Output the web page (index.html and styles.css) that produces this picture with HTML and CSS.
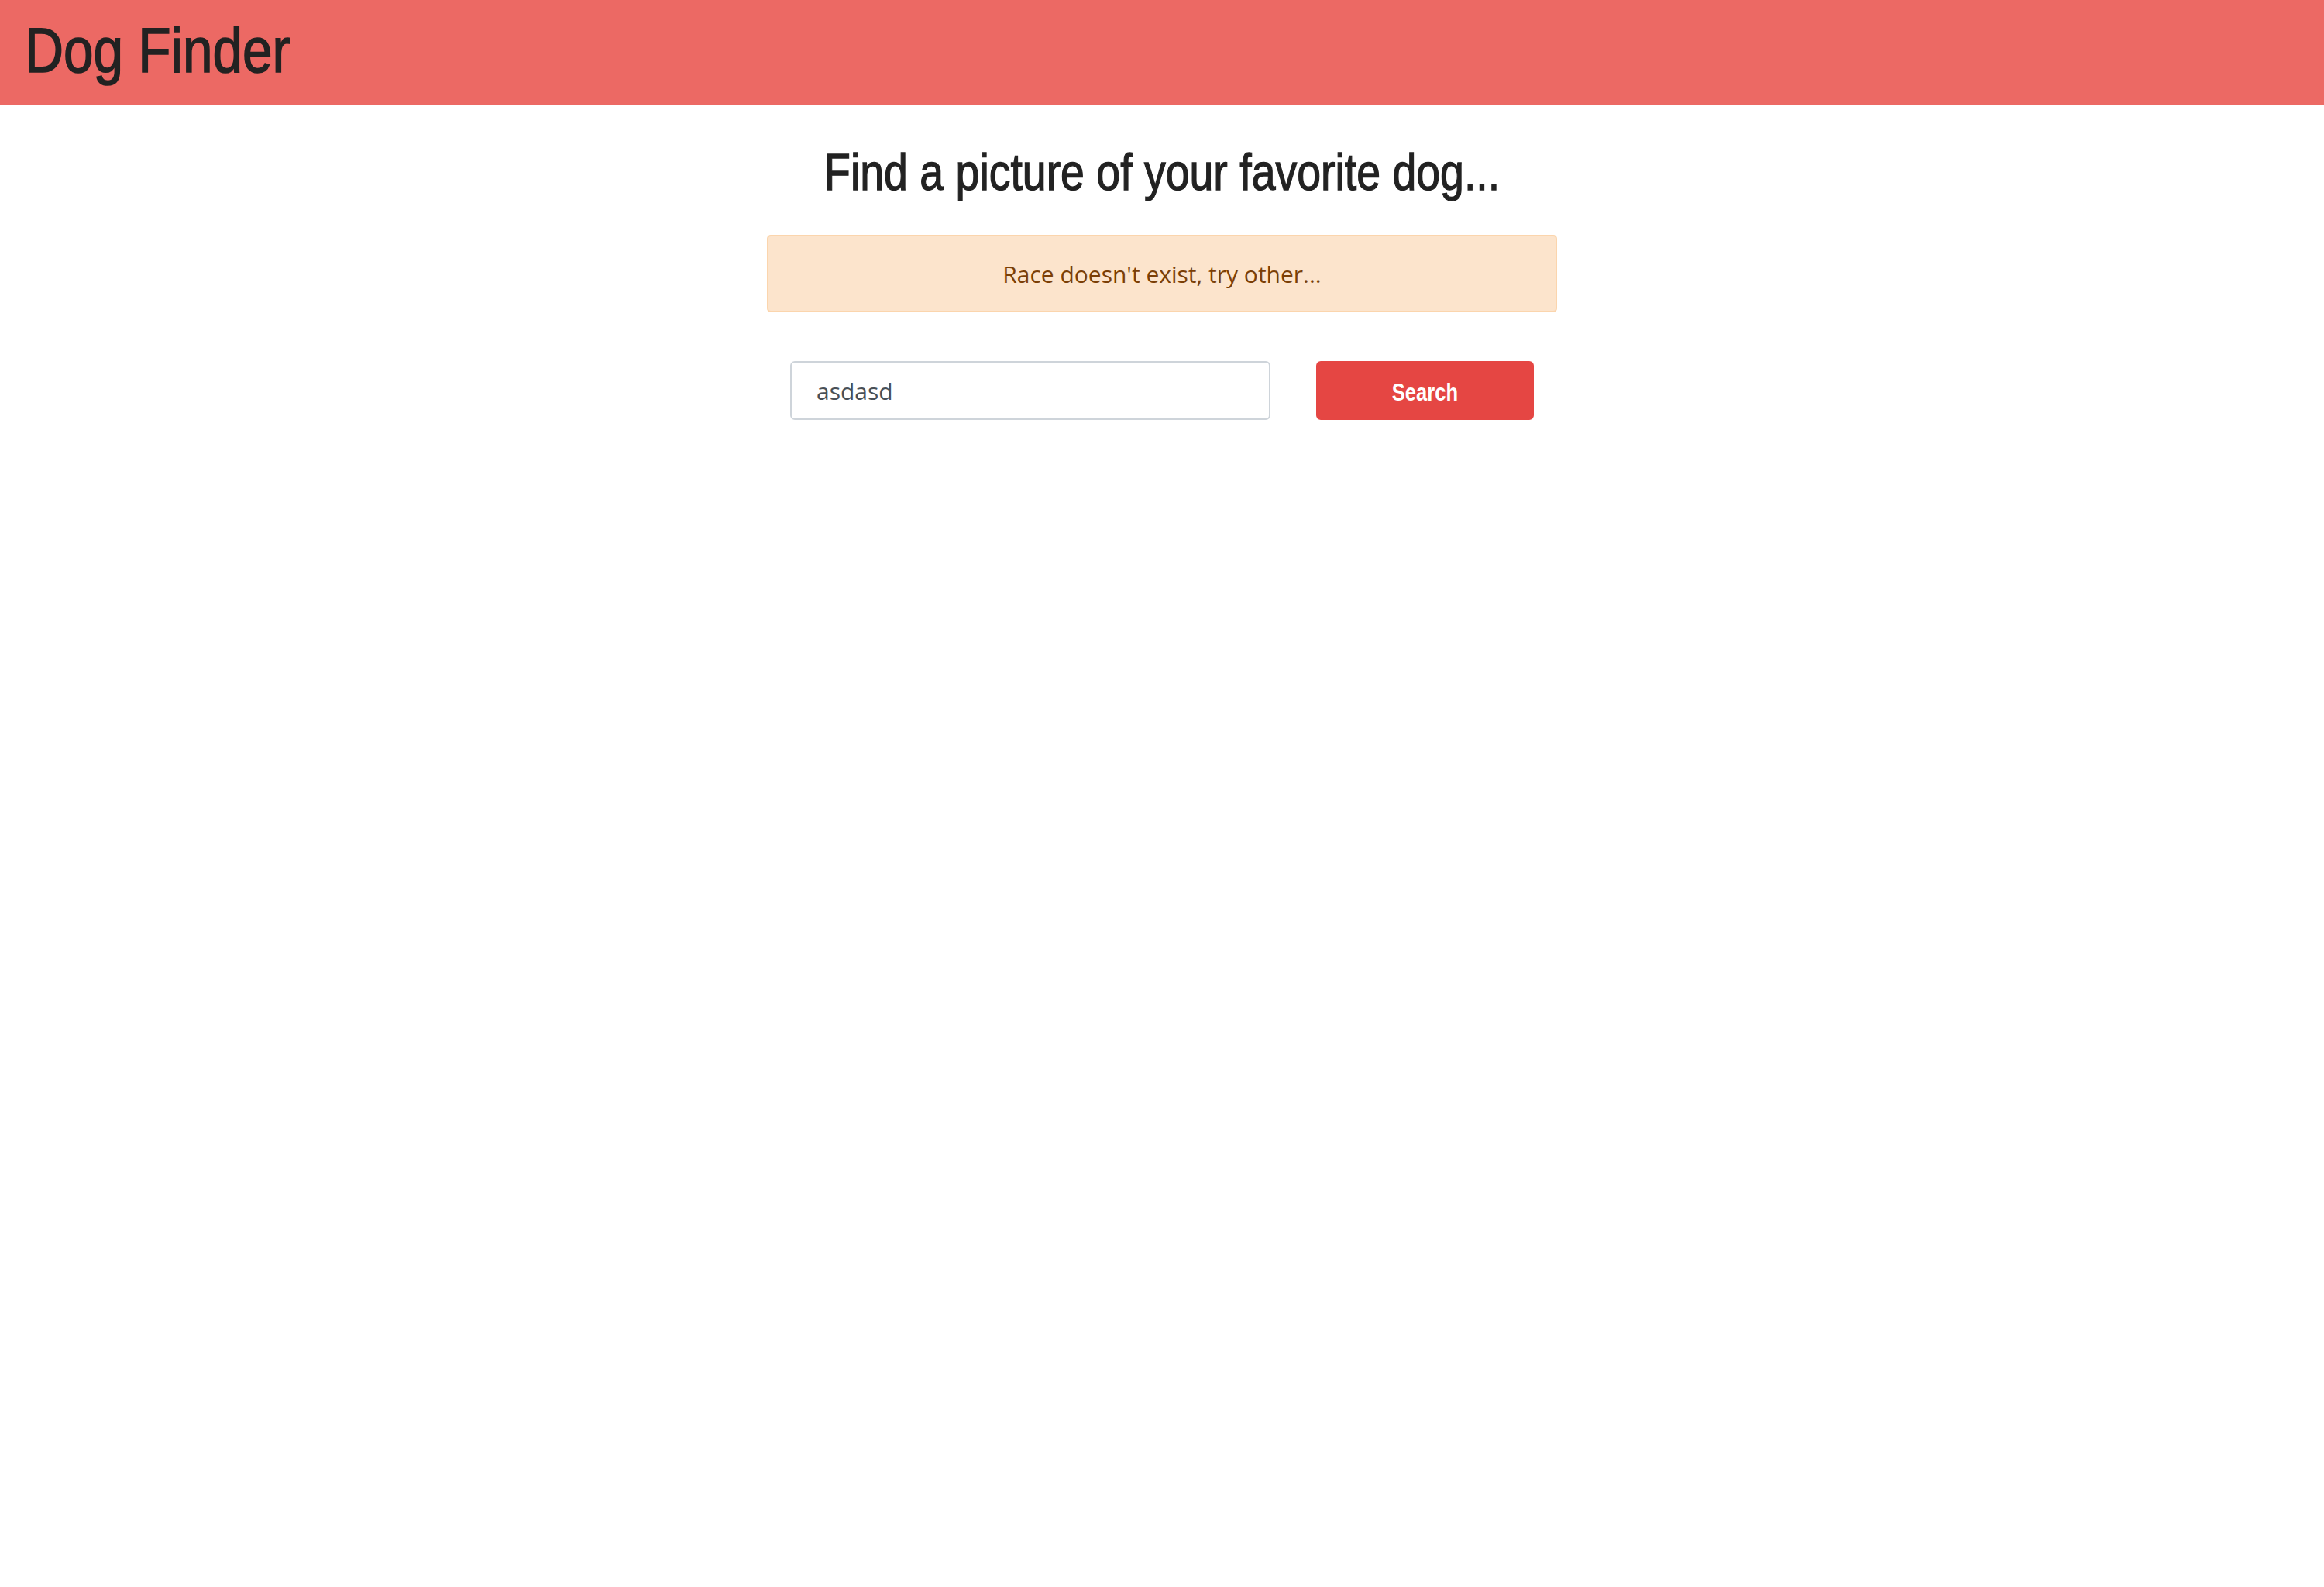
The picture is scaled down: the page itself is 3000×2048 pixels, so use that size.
FILE: index.html
```html
<!DOCTYPE html>
<html lang="en">
<head>
<meta charset="utf-8">
<title>Dog Finder</title>
<link rel="stylesheet" href="styles.css">
</head>
<body>
<header class="topbar">
  <h1 class="brand">Dog Finder</h1>
</header>
<main class="container">
  <h2 class="headline">Find a picture of your favorite dog...</h2>
  <div class="alert">Race doesn't exist, try other...</div>
  <form class="search-row">
    <input class="search-input" type="text" value="asdasd">
    <button class="search-btn" type="button"><span class="search-label">Search</span></button>
  </form>
</main>
</body>
</html>
```
FILE: styles.css
```css
html, body {
  margin: 0;
  padding: 0;
  background: #fff;
}
body {
  font-family: "Open Sans", "Noto Sans", sans-serif;
  color: #212529;
}
.topbar {
  height: 136px;
  background: #ec6964;
  display: flex;
  align-items: center;
  padding-left: 32px;
  box-sizing: border-box;
}
.brand {
  margin: 0;
  display: inline-block;
  font-family: "Liberation Sans", Arial, sans-serif;
  font-weight: 400;
  font-size: 81px;
  line-height: 1;
  color: #222;
  -webkit-text-stroke: 1.6px #222;
  white-space: nowrap;
  transform: translateY(-3px) scaleX(0.855);
  transform-origin: left center;
}
.container {
  width: 1020px;
  margin: 0 auto;
  display: flex;
  flex-direction: column;
  align-items: stretch;
}
.headline {
  align-self: center;
  margin: 47px 0 0;
  white-space: nowrap;
  font-family: "Liberation Sans", Arial, sans-serif;
  font-weight: 400;
  font-size: 66px;
  line-height: 1.2;
  color: #222;
  -webkit-text-stroke: 1.3px #222;
  transform: scaleX(0.84);
}
.alert {
  margin-top: 41px;
  height: 100px;
  box-sizing: border-box;
  background: #fce4cc;
  border: 2px solid #fbd5ad;
  border-radius: 5px;
  color: #7b3f06;
  font-size: 30px;
  display: flex;
  align-items: center;
  justify-content: center;
}
.search-row {
  margin: 63px 0 0;
  padding: 0 30px;
  display: flex;
  gap: 59px;
}
.search-input {
  flex: 0 0 620px;
  height: 76px;
  box-sizing: border-box;
  border: 2px solid #ced4da;
  border-radius: 6px;
  padding: 0 32px;
  font-family: "Open Sans", "Noto Sans", sans-serif;
  font-size: 30px;
  color: #495057;
  outline: none;
}
.search-btn {
  flex: 0 0 281px;
  height: 76px;
  border: none;
  border-radius: 6px;
  background: #e54643;
  color: #fff;
  font-family: "Liberation Sans", Arial, sans-serif;
  font-weight: 700;
  font-size: 32px;
  cursor: pointer;
  display: flex;
  align-items: center;
  justify-content: center;
  padding: 4px 0 0;
}
.search-label {
  display: inline-block;
  transform: scaleX(0.8);
}
```
